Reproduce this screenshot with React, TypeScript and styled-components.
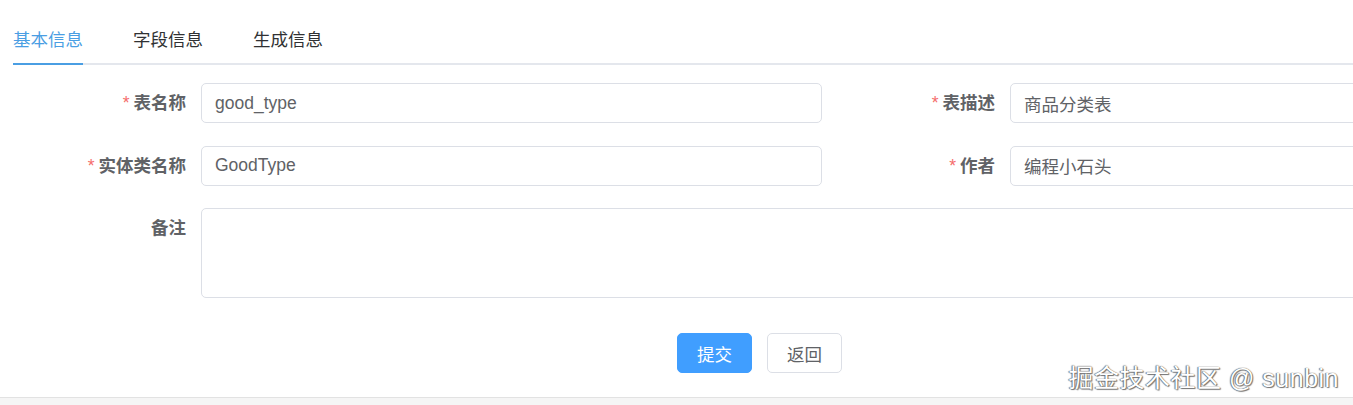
import React from "react";
import styled, { createGlobalStyle } from "styled-components";

const Global = createGlobalStyle`
  html, body {
    margin: 0;
    padding: 0;
    background: #ffffff;
    overflow: hidden;
    font-family: "Liberation Sans", "Noto Sans CJK SC", sans-serif;
  }
  * { box-sizing: border-box; }
`;

const Page = styled.div`
  position: relative;
  width: 1353px;
  height: 405px;
  overflow: hidden;
  display: flex;
  flex-direction: column;
`;

const Main = styled.div`
  flex: 1;
  padding: 14px 0 0 13px;
`;

const TabBar = styled.div`
  display: flex;
  height: 51px;
  border-bottom: 2px solid #e4e7ed;
  width: 1700px;
`;

const Tab = styled.div<{ $active?: boolean; $first?: boolean }>`
  position: relative;
  height: 49px;
  padding: 2px 25px 0 ${(p) => (p.$first ? "0" : "25px")};
  line-height: 49px;
  font-size: 17.5px;
  color: ${(p) => (p.$active ? "#4a9ee3" : "#303133")};
  &::after {
    content: "";
    display: ${(p) => (p.$active ? "block" : "none")};
    position: absolute;
    left: 0;
    right: 25px;
    bottom: -2px;
    height: 2px;
    background: #4a9ee3;
  }
`;

const Form = styled.div`
  padding-top: 18px;
  width: 1618px;
  display: grid;
  grid-template-columns: 809px 809px;
  row-gap: 22.5px;
`;

const FormItem = styled.div<{ $full?: boolean }>`
  display: flex;
  align-items: flex-start;
  grid-column: ${(p) => (p.$full ? "1 / span 2" : "auto")};
`;

const Label = styled.label`
  width: 188px;
  flex: none;
  text-align: right;
  padding-right: 15px;
  line-height: 40px;
  font-size: 17.5px;
  font-weight: bold;
  color: #606266;
`;

const Star = styled.span`
  color: #f56c6c;
  font-weight: normal;
  margin-right: 4px;
`;

const Input = styled.input`
  flex: 1;
  min-width: 0;
  height: 40px;
  border: 1px solid #dcdfe6;
  border-radius: 5px;
  padding: 0 13px;
  font-family: "Liberation Sans", "Noto Sans CJK SC", sans-serif;
  font-size: 17.5px;
  color: #606266;
  background: #fff;
  outline: none;
`;

const TextArea = styled.textarea`
  flex: 1;
  height: 90px;
  border: 1px solid #dcdfe6;
  border-radius: 5px;
  padding: 6px 13px;
  resize: none;
  font-family: "Liberation Sans", "Noto Sans CJK SC", sans-serif;
  font-size: 17.5px;
  color: #606266;
  outline: none;
`;

const ButtonRow = styled.div`
  display: flex;
  gap: 15px;
  padding-left: 664px;
  margin-top: 35px;
`;

const Button = styled.button<{ $primary?: boolean }>`
  width: 75px;
  height: 40px;
  border-radius: 5px;
  font-family: "Liberation Sans", "Noto Sans CJK SC", sans-serif;
  font-size: 17.5px;
  cursor: pointer;
  border: 1px solid ${(p) => (p.$primary ? "#409eff" : "#dcdfe6")};
  background: ${(p) => (p.$primary ? "#409eff" : "#ffffff")};
  color: ${(p) => (p.$primary ? "#ffffff" : "#606266")};
`;

const Footer = styled.div`
  height: 8px;
  border-top: 1px solid #e2e2e2;
  background: #f5f5f5;
`;

const Watermark = styled.div`
  position: absolute;
  right: 14px;
  bottom: 11px;
  font-family: "Liberation Sans", "Noto Sans CJK SC", sans-serif;
  font-size: 25px;
  color: #ffffff;
  text-shadow: 0 0 1px #444, 1px 1px 1px #777, -1px 0 1px #888;
  letter-spacing: 0.5px;
`;

type Field = { label: string; value: string; required?: boolean };

const fields: Field[] = [
  { label: "表名称", value: "good_type", required: true },
  { label: "表描述", value: "商品分类表", required: true },
  { label: "实体类名称", value: "GoodType", required: true },
  { label: "作者", value: "编程小石头", required: true },
];

export default function App() {
  return (
    <Page>
      <Global />
      <Main>
        <TabBar>
          <Tab $active $first>基本信息</Tab>
          <Tab>字段信息</Tab>
          <Tab>生成信息</Tab>
        </TabBar>
        <Form>
          {fields.map((f) => (
            <FormItem key={f.label}>
              <Label>
                {f.required && <Star>*</Star>}
                {f.label}
              </Label>
              <Input defaultValue={f.value} readOnly />
            </FormItem>
          ))}
          <FormItem $full>
            <Label>备注</Label>
            <TextArea readOnly />
          </FormItem>
        </Form>
        <ButtonRow>
          <Button $primary>提交</Button>
          <Button>返回</Button>
        </ButtonRow>
      </Main>
      <Footer />
      <Watermark>掘金技术社区 @ sunbin</Watermark>
    </Page>
  );
}
